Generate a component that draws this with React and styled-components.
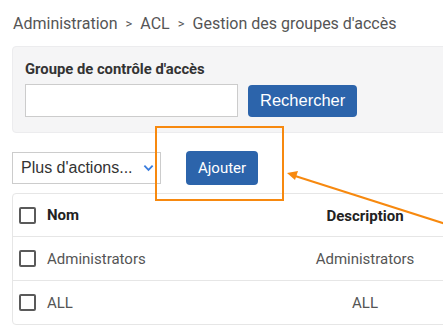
import React from 'react';
import styled, { createGlobalStyle } from 'styled-components';

const GlobalStyle = createGlobalStyle`
  html, body {
    margin: 0;
    padding: 0;
    background: #ffffff;
    overflow: hidden;
  }
  body {
    font-family: Roboto, "Liberation Sans", Arial, sans-serif;
    width: 443px;
    height: 327px;
  }
`;

const rows = [
  { name: 'Administrators', description: 'Administrators' },
  { name: 'ALL', description: 'ALL' },
];

function App() {
  return (
    <>
      <GlobalStyle />
      <Page>
        <Breadcrumb>
          <Crumb>Administration</Crumb>
          <Sep>&gt;</Sep>
          <Crumb>ACL</Crumb>
          <Sep>&gt;</Sep>
          <Crumb>Gestion des groupes d'accès</Crumb>
        </Breadcrumb>

        <SearchPanel>
          <FieldLabel>Groupe de contrôle d'accès</FieldLabel>
          <SearchRow>
            <TextInput type="text" />
            <PrimaryButton $size="lg">Rechercher</PrimaryButton>
          </SearchRow>
        </SearchPanel>

        <Toolbar>
          <ActionSelect>
            <span>Plus d'actions...</span>
            <Chevron viewBox="0 0 12 8">
              <path d="M1.5 1.5 L6 6 L10.5 1.5" fill="none" stroke="#3b7ddd" strokeWidth="2" />
            </Chevron>
          </ActionSelect>
          <PrimaryButton $size="md">Ajouter</PrimaryButton>
        </Toolbar>

        <TableCard>
          <HeaderRow>
            <Cell>
              <Checkbox />
              <HeadText>Nom</HeadText>
            </Cell>
            <DescCell>
              <HeadText>Description</HeadText>
            </DescCell>
          </HeaderRow>
          {rows.map((r) => (
            <BodyRow key={r.name}>
              <Cell>
                <Checkbox />
                <BodyText>{r.name}</BodyText>
              </Cell>
              <DescCell>
                <BodyText>{r.description}</BodyText>
              </DescCell>
            </BodyRow>
          ))}
        </TableCard>

        <Annotation viewBox="0 0 443 327" width="443" height="327">
          <rect x="156" y="127" width="127" height="73" fill="none" stroke="#f7890f" strokeWidth="2" />
          <line x1="452" y1="226" x2="292" y2="175" stroke="#f7890f" strokeWidth="2" />
          <path d="M287 173 L298 171 L295 180 Z" fill="#f7890f" />
        </Annotation>
      </Page>
    </>
  );
}

export default App;

const Page = styled.div`
  position: relative;
  width: 443px;
  height: 327px;
  overflow: hidden;
  padding: 12px 0 0 12px;
  box-sizing: border-box;
`;

const Breadcrumb = styled.div`
  display: flex;
  align-items: center;
  gap: 8px;
  margin-left: 1px;
  height: 22px;
  font-size: 16px;
  color: #555555;
  white-space: nowrap;
`;

const Crumb = styled.span``;

const Sep = styled.span`
  font-size: 13px;
  color: #555555;
`;

const SearchPanel = styled.div`
  margin-top: 12px;
  width: 460px;
  box-sizing: border-box;
  padding: 13px 12px 15px 12px;
  background: #f5f5f6;
  border: 1px solid #ececee;
  border-radius: 4px;
`;

const FieldLabel = styled.div`
  font-size: 14.8px;
  font-weight: 700;
  color: #333333;
  line-height: 18px;
`;

const SearchRow = styled.div`
  display: flex;
  align-items: center;
  gap: 10px;
  margin-top: 6px;
`;

const TextInput = styled.input`
  width: 213px;
  height: 33px;
  box-sizing: border-box;
  border: 1px solid #cccccc;
  background: #ffffff;
  margin: 0;
  padding: 0 8px;
`;

const PrimaryButton = styled.button`
  font-family: ${(p) => (p.$size === 'lg' ? '"Liberation Sans", Arial' : 'Roboto, "Liberation Sans"')}, sans-serif;
  font-size: ${(p) => (p.$size === 'lg' ? '16.5px' : '15px')};
  height: ${(p) => (p.$size === 'lg' ? '32px' : '34px')};
  padding: 0 12px;
  color: #ffffff;
  background: #2c64ab;
  border: none;
  border-radius: 4px;
  cursor: pointer;
`;

const Toolbar = styled.div`
  display: flex;
  align-items: center;
  gap: 25px;
  margin-top: 18px;
  height: 34px;
`;

const ActionSelect = styled.div`
  display: flex;
  align-items: center;
  justify-content: space-between;
  width: 149px;
  height: 32px;
  box-sizing: border-box;
  border: 1px solid #cccccc;
  padding: 0 6px 0 8px;
  font-family: "Liberation Sans", Arial, sans-serif;
  font-size: 16px;
  color: #333333;
`;

const Chevron = styled.svg`
  width: 11px;
  height: 8px;
`;

const TableCard = styled.div`
  margin-top: 8px;
  width: 470px;
  border: 1px solid #e6e6e6;
  border-radius: 4px;
`;

const RowBase = styled.div`
  display: grid;
  grid-template-columns: 273px 158px 1fr;
  align-items: center;
`;

const HeaderRow = styled(RowBase)`
  height: 42px;
  border-bottom: 1px solid #e6e6e6;
`;

const BodyRow = styled(RowBase)`
  height: 43px;
  & + & {
    border-top: 1px solid #e6e6e6;
  }
`;

const Cell = styled.div`
  display: flex;
  align-items: center;
  gap: 11px;
  padding-left: 6px;
`;

const DescCell = styled.div`
  text-align: center;
`;

const Checkbox = styled.span`
  display: inline-block;
  width: 17px;
  height: 17px;
  box-sizing: border-box;
  border: 2px solid #5a5a5a;
  border-radius: 2px;
`;

const HeadText = styled.span`
  font-size: 15px;
  font-weight: 700;
  color: #222222;
`;

const BodyText = styled.span`
  font-size: 15px;
  color: #555555;
`;

const Annotation = styled.svg`
  position: absolute;
  left: 0;
  top: 0;
  pointer-events: none;
`;
